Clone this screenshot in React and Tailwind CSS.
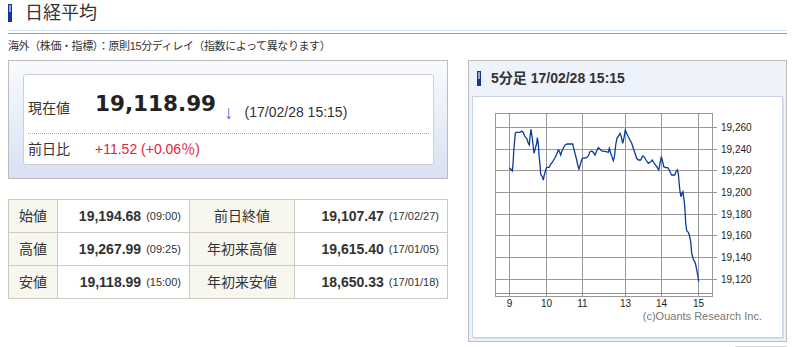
const LINE = [
  [509.3,167.7],[512.3,171],[513,164.3],[513.7,151.7],[515.3,133.3],[516,132.3],[520,132.3],[521.7,131],[523.3,132.7],[525,136.7],[526.7,138.3],[528.3,143.3],[529.3,145],[530,136.7],[531,129.3],[532.3,138.3],[534,153.3],[535.3,148.3],[536.7,143.3],[537.3,137.7],[538.3,143.3],[539,155],[540,165],[540.7,174.3],[542.3,176.7],[543.3,180],[544.3,175],[545.7,170],[546.7,167.3],[549,167.3],[550.7,164.3],[552.7,161.7],[555,157.7],[556.7,154.3],[558.3,150],[559.3,151],[560.7,155],[561.7,151.7],[563.3,148.3],[565,145],[567.3,144],[572.7,144],[573.3,146.7],[575,153.3],[576.7,160],[577.7,165],[579,169],[580.7,163.3],[581.7,160],[582.3,158.3],[586.7,157.7],[588.3,156],[590,151.7],[591.7,151],[593.3,152.3],[595,155],[596.7,151],[598.3,147.7],[600,149.3],[601.7,151],[606,151.7],[608.3,152.3],[609.3,148.3],[610.7,153.3],[612,156.7],[613.3,160.7],[614.3,157.7],[615.7,145],[617,138.3],[618.7,135.7],[620,133.3],[621.3,136.7],[622.7,143.3],[624,137.7],[625.3,130],[626.7,133.3],[628.3,136.7],[630,140],[631.7,143.3],[633.3,148.3],[635,153.3],[636.7,158.3],[638.3,160],[640.7,160],[642.7,156],[644,156.7],[646,160],[648.3,163.3],[650.7,161.7],[652.3,160],[654.3,163.3],[656,165.7],[657.3,167.7],[658.7,170],[660,163.3],[661.3,156.7],[662.7,161.7],[663.7,166.7],[665.7,167.7],[667.7,167.7],[669.3,170],[670.7,173.3],[671.7,175],[674.7,175],[676,171.7],[677.3,170],[678.3,173.3],[679,181.7],[680,191.7],[681,196.7],[682,193.3],[683,191.7],[683.3,195],[684.3,201.7],[685,210],[685.7,223.3],[686.7,230.7],[688.3,232.3],[689.3,235],[690.7,241.7],[691.7,253.3],[693.3,259.3],[695,262.3],[696,266],[696.7,270],[697.7,275],[698.7,281.7],
];

const Y_GRID = [
  [30.5, '19,260'], [52.5, '19,240'], [73.5, '19,220'], [95.5, '19,200'],
  [117.5, '19,180'], [138.5, '19,160'], [160.5, '19,140'], [182.5, '19,120'],
];
const X_GRID = [[36.5, '9'], [73.5, '10'], [109.5, '11'], [152.5, '13'], [188.5, '14'], [225.5, '15']];

const ROWS = [
  ['始値', '19,194.68', '(09:00)', '前日終値', '19,107.47', '(17/02/27)'],
  ['高値', '19,267.99', '(09:25)', '年初来高値', '19,615.40', '(17/01/05)'],
  ['安値', '19,118.99', '(15:00)', '年初来安値', '18,650.33', '(17/01/18)'],
];

function Chart() {
  const pts = LINE.map(([x, y]) => `${(x - 473).toFixed(1)},${(y - 97).toFixed(1)}`).join(' ');
  return (
    <svg width="309" height="212" className="block">
      <g stroke="#999" strokeWidth="1" fill="none">
        {Y_GRID.map(([y]) => (
          <line key={y} x1="22.5" x2="244" y1={y} y2={y} />
        ))}
        {X_GRID.map(([x]) => (
          <line key={x} x1={x} x2={x} y1="16.5" y2="199.5" />
        ))}
        <rect x="22.5" y="16.5" width="217" height="183" />
      </g>
      <line x1="23" x2="239" y1="196.5" y2="196.5" stroke="#ee6b6b" strokeWidth="1" />
      <polyline points={pts} fill="none" stroke="#0b3a9e" strokeWidth="1.3" strokeLinejoin="miter" />
      <g fill="#222" fontSize="10" fontFamily="Liberation Sans, sans-serif">
        {Y_GRID.map(([y, t]) => (
          <text key={t} x="248" y={y + 3.5}>{t}</text>
        ))}
        {X_GRID.map(([x, t]) => (
          <text key={t} x={x} y="210" textAnchor="middle">{t}</text>
        ))}
      </g>
    </svg>
  );
}

function Mark({ h }) {
  return (
    <div className={`w-[4px] ${h} bg-[#12359c] shrink-0`}>
      <div className="w-[2px] h-[7px] ml-[1px] mt-[1px] bg-[#8da6d4]" />
    </div>
  );
}

export default function App() {
  return (
    <div className="w-[794px] h-[347px] bg-white text-[#333] font-['Liberation_Sans','Noto_Sans_CJK_JP',sans-serif] overflow-hidden">
      <div className="h-[30px] pl-[8px] pt-[4px] flex items-start gap-[13px]">
        <Mark h="h-[18px]" />
        <span className="text-[18px] leading-[18px] text-[#333]">日経平均</span>
      </div>
      <div className="ml-[8px] w-[779px] h-px bg-[#d3e2f3]" />
      <div className="ml-[8px] w-[779px] h-px mt-[2px] bg-[#7fa5d6]" />
      <div className="mt-[6px] pl-[8px] text-[11px] leading-[12px] tracking-[-0.4px]">
        海外（株価・指標）：原則15分ディレイ（指数によって異なります）
      </div>

      <div className="mt-[8px] pl-[8px] flex gap-[20px]">
        <div className="w-[440px]">
          <div className="h-[119px] border border-[#bdbdbd] bg-gradient-to-b from-[#f8fafd] to-[#d9e1f2] pt-[13px] pl-[14px] pr-[13px]">
            <div className="h-[91px] border border-[#d0d0d0] rounded-[3px] bg-white">
              <div className="h-[58px] flex items-center px-[4px]">
                <span className="w-[67px] text-[14px] mt-[8px]">現在値</span>
                <span className="font-['DejaVu_Sans'] font-bold text-[21.5px] leading-none text-[#222]">19,118.99</span>
                <span className="ml-[8px] mt-[16px] text-[19px] leading-none text-[#6b63d8]">↓</span>
                <span className="ml-[11px] mt-[16px] text-[14px] leading-none">(17/02/28 15:15)</span>
              </div>
              <div className="mx-[4px] border-t border-dotted border-[#a8a8a8]" />
              <div className="h-[30px] flex items-center px-[4px]">
                <span className="w-[67px] text-[14px]">前日比</span>
                <span className="text-[14px] text-[#e2243d]">+11.52 (+0.06％)</span>
              </div>
            </div>
          </div>

          <div className="mt-[20px] grid grid-cols-[49px_132px_105px_153px] border-t border-l border-[#cfcac0]">
            {ROWS.map((r) => (
              <div key={r[0]} className="contents">
                <div className="h-[33px] border-r border-b border-[#cfcac0] bg-[#f8f7ef] flex items-center justify-center text-[14px]">{r[0]}</div>
                <div className="h-[33px] border-r border-b border-[#cfcac0] flex items-center justify-end pr-[8px] gap-[5px]">
                  <span className="text-[14px] font-bold">{r[1]}</span>
                  <span className="text-[11px]">{r[2]}</span>
                </div>
                <div className="h-[33px] border-r border-b border-[#cfcac0] bg-[#f8f7ef] flex items-center justify-center text-[14px]">{r[3]}</div>
                <div className="h-[33px] border-r border-b border-[#cfcac0] flex items-center justify-end pr-[8px] gap-[5px]">
                  <span className="text-[14px] font-bold">{r[4]}</span>
                  <span className="text-[11px]">{r[5]}</span>
                </div>
              </div>
            ))}
          </div>
        </div>

        <div className="w-[319px] flex flex-col">
          <div className="h-[282px] border border-[#bdbdbd] bg-[#eef2fa] px-[3px]">
            <div className="h-[35px] flex items-center gap-[10px] pl-[5px]">
              <Mark h="h-[15px]" />
              <span className="text-[14px] font-bold text-[#333]">5分足 17/02/28 15:15</span>
            </div>
            <div className="h-[242px] border border-[#c9d3e6] bg-white shadow-[1px_1px_0_#d3def2]">
              <Chart />
              <div className="pr-[20px] text-right text-[11px] leading-[14px] text-[#777]">(c)Ouants Research Inc.</div>
            </div>
          </div>
          <div className="self-end mt-[4px] w-[52px] h-[4px] border-t border-l border-[#d6d6d6]" />
        </div>
      </div>
    </div>
  );
}
